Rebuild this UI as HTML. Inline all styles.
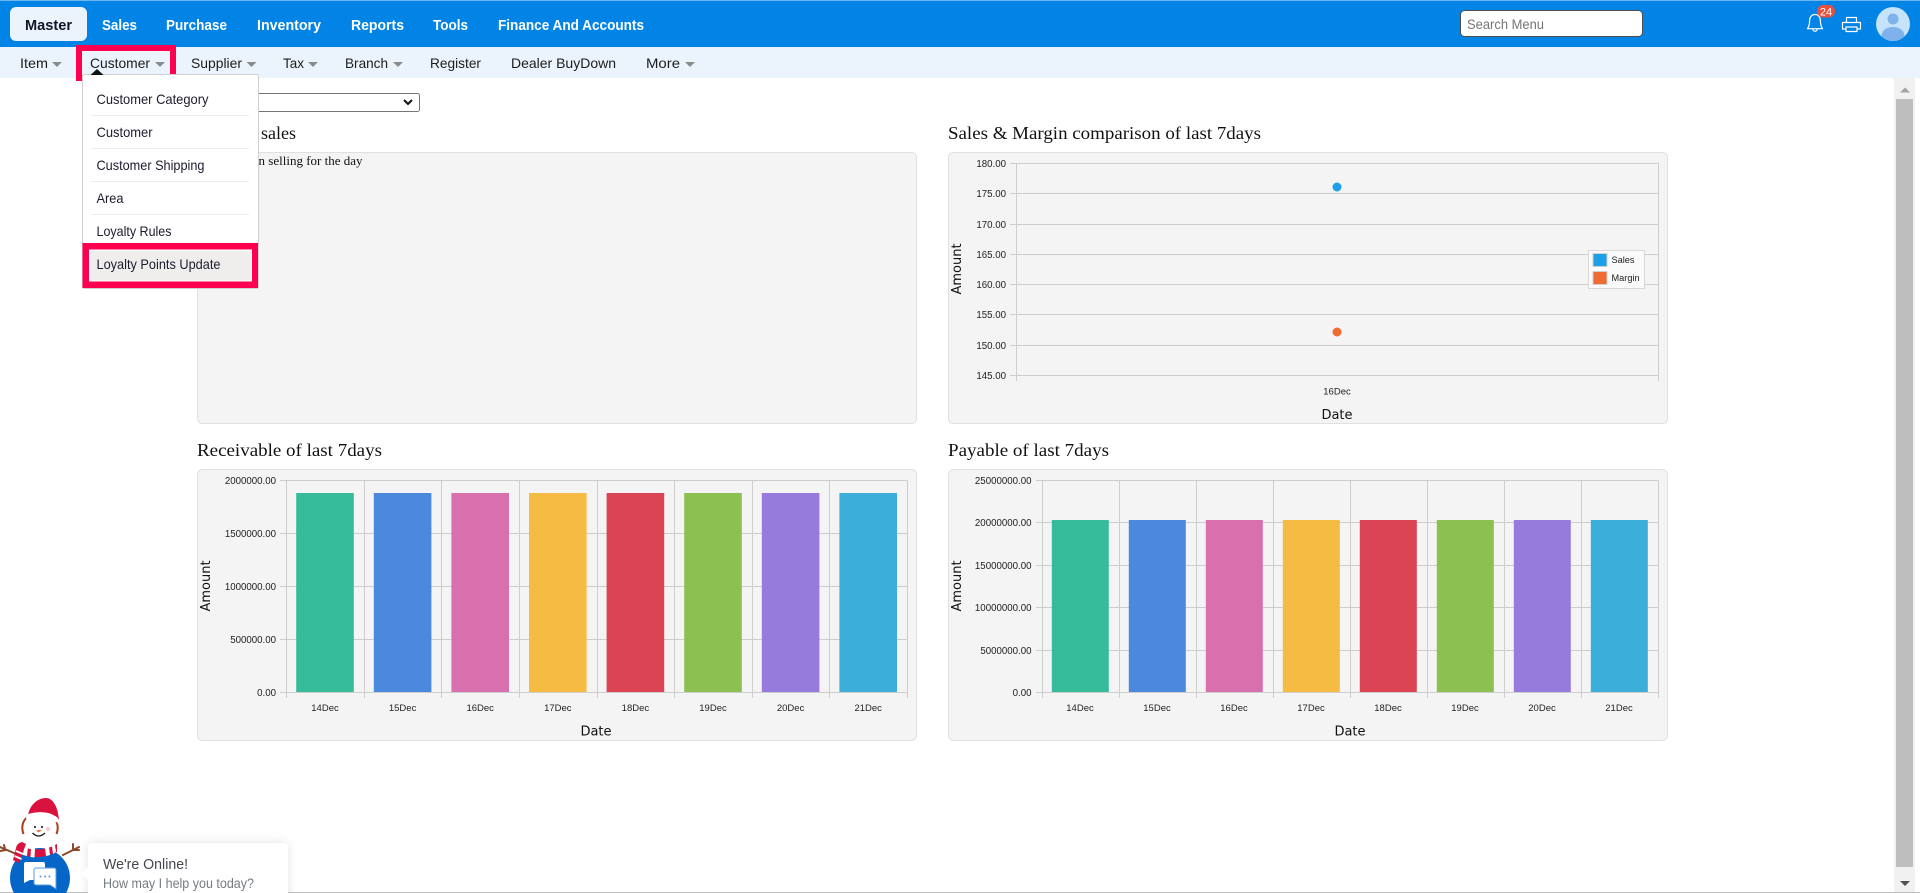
<!DOCTYPE html>
<html><head><meta charset="utf-8"><title>Dashboard</title>
<style>
html,body{margin:0;padding:0;width:1920px;height:893px;overflow:hidden;background:#fff}
body{position:relative;font-family:"Liberation Sans",sans-serif}
svg{position:absolute;left:0;top:0}
.sf{font-family:"Liberation Serif",serif;fill:#111}
.s{font-family:"Liberation Sans",sans-serif}
.top{font-size:15px;font-weight:700;fill:#fff}
.sub{font-size:14px;fill:#1c1c1c}
.dd{font-size:14px;fill:#1c1c2e}
.l{font-size:9.7px;fill:#222;text-anchor:end}
.c{font-size:9.5px;fill:#222;text-anchor:middle}
.a{font-family:"DejaVu Sans",sans-serif;font-size:13px;fill:#111;text-anchor:middle}
.g{stroke:#cdcdcd;stroke-width:1;fill:none;shape-rendering:crispEdges}
.car{fill:#8b8b8b}
</style></head>
<body>
<svg width="1920" height="893" viewBox="0 0 1920 893">
<!-- page frame -->
<rect x="0" y="892" width="1920" height="1" fill="#bdbdbd"/>
<!-- top bar -->
<rect x="0" y="1" width="1920" height="46" fill="#0283e6"/>
<rect x="0" y="0" width="1920" height="1" fill="#6eb6ee"/>
<rect x="0" y="47" width="1920" height="31" fill="#ebf4fc"/>
<rect x="10" y="7" width="77" height="34" rx="6" fill="#ebf4fc"/>
<text x="25" y="30" class="top" style="fill:#14142b" textLength="47" lengthAdjust="spacingAndGlyphs">Master</text>
<text x="102" y="30" class="top" textLength="35" lengthAdjust="spacingAndGlyphs">Sales</text>
<text x="166" y="30" class="top" textLength="61" lengthAdjust="spacingAndGlyphs">Purchase</text>
<text x="257" y="30" class="top" textLength="64" lengthAdjust="spacingAndGlyphs">Inventory</text>
<text x="351" y="30" class="top" textLength="53" lengthAdjust="spacingAndGlyphs">Reports</text>
<text x="433" y="30" class="top" textLength="35" lengthAdjust="spacingAndGlyphs">Tools</text>
<text x="498" y="30" class="top" textLength="146" lengthAdjust="spacingAndGlyphs">Finance And Accounts</text>
<!-- search -->
<rect x="1460.5" y="10.5" width="182" height="26" rx="4" fill="#fff" stroke="#4d4d4d"/>
<text x="1467" y="29" font-size="14" fill="#757575" class="s" textLength="77" lengthAdjust="spacingAndGlyphs">Search Menu</text>
<!-- bell -->
<path d="M1815 14.5c-3.6 0-5.4 2.8-5.4 6.200 0 3.600-.4 5.600-2.200 8h15.200c-1.800-2.400-2.200-4.400-2.200-8 0-3.400-1.800-6.200-5.400-6.200z" fill="none" stroke="#fff" stroke-width="1.200" stroke-linejoin="round"/>
<path d="M1812.800 29a2.200 2.200 0 0 0 4.400 0" fill="none" stroke="#fff" stroke-width="1.200"/>
<rect x="1817" y="5" width="18" height="12.500" rx="6.200" fill="#e9503e"/>
<text x="1826" y="15.300" font-size="11" fill="#fff" text-anchor="middle" class="s">24</text>
<!-- printer -->
<path d="M1846.500 22.500v-5h10v5M1845.500 29h-3v-6.500h18V29h-3M1846 27h11v4.500h-11z" fill="none" stroke="#fff" stroke-width="1.200" stroke-linejoin="round"/>
<!-- avatar -->
<circle cx="1893" cy="24" r="17" fill="#c6e3fc"/>
<circle cx="1893" cy="19" r="5.500" fill="#7fb2ea"/>
<path d="M1881.500 36.500c0-6 5-9.500 11.500-9.500s11.500 3.500 11.500 9.500a17 17 0 0 1-23 0z" fill="#7fb2ea"/>

<!-- sub nav -->
<text x="20" y="68" class="sub" textLength="28" lengthAdjust="spacingAndGlyphs">Item</text><path class="car" d="M52 62h10l-5 5z"/>
<text x="90" y="68" class="sub" textLength="60" lengthAdjust="spacingAndGlyphs">Customer</text><path class="car" d="M155 62h10l-5 5z"/>
<text x="191" y="68" class="sub" textLength="51" lengthAdjust="spacingAndGlyphs">Supplier</text><path class="car" d="M246.500 62h10l-5 5z"/>
<text x="283" y="68" class="sub" textLength="21" lengthAdjust="spacingAndGlyphs">Tax</text><path class="car" d="M308 62h10l-5 5z"/>
<text x="345" y="68" class="sub" textLength="43" lengthAdjust="spacingAndGlyphs">Branch</text><path class="car" d="M393 62h10l-5 5z"/>
<text x="430" y="68" class="sub" textLength="51" lengthAdjust="spacingAndGlyphs">Register</text>
<text x="511" y="68" class="sub" textLength="105" lengthAdjust="spacingAndGlyphs">Dealer BuyDown</text>
<text x="646" y="68" class="sub" textLength="34" lengthAdjust="spacingAndGlyphs">More</text><path class="car" d="M685 62h10l-5 5z"/>

<!-- scrollbar -->
<rect x="1894" y="78" width="21" height="814" fill="#f1f1f1"/>
<rect x="1896" y="99" width="17" height="768" fill="#bebebe"/>
<path d="M1905 87.500l5 5h-10z" fill="#a3a3a3"/>
<path d="M1900 881h10l-5 5z" fill="#505050"/>

<!-- content headings -->
<text x="296" y="139" class="sf" font-size="18" text-anchor="end">Top sales</text>
<text x="948" y="139" class="sf" font-size="18" textLength="313" lengthAdjust="spacingAndGlyphs">Sales &amp; Margin comparison of last 7days</text>
<text x="197" y="456" class="sf" font-size="18" textLength="185" lengthAdjust="spacingAndGlyphs">Receivable of last 7days</text>
<text x="948" y="456" class="sf" font-size="18" textLength="161" lengthAdjust="spacingAndGlyphs">Payable of last 7days</text>

<!-- select -->
<rect x="197.500" y="93.500" width="222" height="18" rx="2" fill="#fff" stroke="#767676"/>
<path d="M404 100l4 4 4-4" fill="none" stroke="#111" stroke-width="2"/>

<!-- panels -->
<rect x="197.500" y="152.500" width="719" height="271" rx="5" fill="#f4f4f4" stroke="#e0e0e0"/>
<rect x="948.500" y="152.500" width="719" height="271" rx="5" fill="#f4f4f4" stroke="#e0e0e0"/>
<rect x="197.500" y="469.500" width="719" height="271" rx="5" fill="#f4f4f4" stroke="#e0e0e0"/>
<rect x="948.500" y="469.500" width="719" height="271" rx="5" fill="#f4f4f4" stroke="#e0e0e0"/>
<text x="362.500" y="165" class="sf" font-size="13" text-anchor="end">No item on selling for the day</text>

<!-- chart sales & margin -->
<path class="g" d="M1016.500 163.500H1658.500V381M1016.500 163.500V381M1010 163.500h6.500M1010 193.500H1658.500M1010 224.500H1658.500M1010 254.500H1658.500M1010 284.500H1658.500M1010 314.500H1658.500M1010 345.500H1658.500M1010 375.500H1658.500"/>
<g class="s">
<text x="1006" y="167" class="l">180.00</text><text x="1006" y="197" class="l">175.00</text><text x="1006" y="228" class="l">170.00</text><text x="1006" y="258" class="l">165.00</text><text x="1006" y="288" class="l">160.00</text><text x="1006" y="318" class="l">155.00</text><text x="1006" y="349" class="l">150.00</text><text x="1006" y="379" class="l">145.00</text>
<text x="1337" y="394.500" class="c">16Dec</text>
</g>
<circle cx="1337" cy="187" r="4.500" fill="#1e9fe8"/>
<circle cx="1337" cy="332" r="4.500" fill="#f06a33"/>
<text x="1337" y="419" class="a">Date</text>
<text class="a" transform="translate(961,269) rotate(-90)">Amount</text>
<rect x="1588.500" y="250.500" width="56" height="38" fill="#fafafa" stroke="#d8d8d8"/>
<rect x="1593" y="253.500" width="14" height="13" fill="#1e9fe8" stroke="#d0d0d0"/>
<rect x="1593" y="271.500" width="14" height="13" fill="#f06a33" stroke="#d0d0d0"/>
<g class="s" font-size="9.200" fill="#222"><text x="1611.500" y="263">Sales</text><text x="1611.500" y="281">Margin</text></g>

<!-- chart receivable -->
<path class="g" d="M280 480.500H907.500M280 533.500H907.500M280 586.500H907.500M280 639.500H907.500M280 692.500H907.500M286.500 480.500V698M364.500 480.500V698M441.500 480.500V698M519.500 480.500V698M597.500 480.500V698M674.500 480.500V698M752.500 480.500V698M829.500 480.500V698M907.500 480.500V698"/>
<rect x="296.200" y="493" width="57.600" height="199" fill="#37bc9b"/>
<rect x="373.800" y="493" width="57.600" height="199" fill="#4a89dc"/>
<rect x="451.400" y="493" width="57.600" height="199" fill="#d770ad"/>
<rect x="529" y="493" width="57.600" height="199" fill="#f6bb42"/>
<rect x="606.600" y="493" width="57.600" height="199" fill="#da4453"/>
<rect x="684.200" y="493" width="57.600" height="199" fill="#8cc152"/>
<rect x="761.800" y="493" width="57.600" height="199" fill="#967adc"/>
<rect x="839.400" y="493" width="57.600" height="199" fill="#3bafda"/>
<g class="s">
<text x="276" y="484" class="l">2000000.00</text><text x="276" y="537" class="l">1500000.00</text><text x="276" y="590" class="l">1000000.00</text><text x="276" y="643" class="l">500000.00</text><text x="276" y="696" class="l">0.00</text>
<text x="325" y="711" class="c">14Dec</text><text x="402.600" y="711" class="c">15Dec</text><text x="480.200" y="711" class="c">16Dec</text><text x="557.800" y="711" class="c">17Dec</text><text x="635.400" y="711" class="c">18Dec</text><text x="713" y="711" class="c">19Dec</text><text x="790.600" y="711" class="c">20Dec</text><text x="868.200" y="711" class="c">21Dec</text>
</g>
<text x="596" y="735.500" class="a">Date</text>
<text class="a" transform="translate(210,586) rotate(-90)">Amount</text>

<!-- chart payable -->
<path class="g" d="M1036 480.500H1658.500M1036 522.500H1658.500M1036 565.500H1658.500M1036 607.500H1658.500M1036 650.500H1658.500M1036 692.500H1658.500M1042.500 480.500V698M1119.500 480.500V698M1196.500 480.500V698M1273.500 480.500V698M1350.500 480.500V698M1427.500 480.500V698M1504.500 480.500V698M1581.500 480.500V698M1658.500 480.500V698"/>
<rect x="1051.800" y="520" width="57" height="172" fill="#37bc9b"/>
<rect x="1128.800" y="520" width="57" height="172" fill="#4a89dc"/>
<rect x="1205.800" y="520" width="57" height="172" fill="#d770ad"/>
<rect x="1282.800" y="520" width="57" height="172" fill="#f6bb42"/>
<rect x="1359.800" y="520" width="57" height="172" fill="#da4453"/>
<rect x="1436.800" y="520" width="57" height="172" fill="#8cc152"/>
<rect x="1513.800" y="520" width="57" height="172" fill="#967adc"/>
<rect x="1590.800" y="520" width="57" height="172" fill="#3bafda"/>
<g class="s">
<text x="1031.500" y="484" class="l">25000000.00</text><text x="1031.500" y="526" class="l">20000000.00</text><text x="1031.500" y="569" class="l">15000000.00</text><text x="1031.500" y="611" class="l">10000000.00</text><text x="1031.500" y="654" class="l">5000000.00</text><text x="1031.500" y="696" class="l">0.00</text>
<text x="1080" y="711" class="c">14Dec</text><text x="1157" y="711" class="c">15Dec</text><text x="1234" y="711" class="c">16Dec</text><text x="1311" y="711" class="c">17Dec</text><text x="1388" y="711" class="c">18Dec</text><text x="1465" y="711" class="c">19Dec</text><text x="1542" y="711" class="c">20Dec</text><text x="1619" y="711" class="c">21Dec</text>
</g>
<text x="1350" y="735.500" class="a">Date</text>
<text class="a" transform="translate(961,586) rotate(-90)">Amount</text>

<!-- customer highlight -->
<rect x="79" y="48" width="94" height="30" fill="none" stroke="#ff0050" stroke-width="6"/>
<rect x="82.500" y="51.500" width="87" height="23" fill="none" stroke="#f4f4f4"/>

<!-- dropdown -->
<rect x="82.500" y="74.500" width="176" height="214" rx="2" fill="#fff" stroke="#cfcfcf"/>
<path d="M97 69l6.500 6h-13z" fill="#111"/>
<g stroke="#ececec"><path d="M91 115.500H249M91 148.500H249M91 181.500H249M91 214.500H249"/></g>
<text x="96.500" y="104" class="dd" textLength="112" lengthAdjust="spacingAndGlyphs">Customer Category</text>
<text x="96.500" y="137" class="dd" textLength="56" lengthAdjust="spacingAndGlyphs">Customer</text>
<text x="96.500" y="170" class="dd" textLength="108" lengthAdjust="spacingAndGlyphs">Customer Shipping</text>
<text x="96.500" y="203" class="dd" textLength="27" lengthAdjust="spacingAndGlyphs">Area</text>
<text x="96.500" y="236" class="dd" textLength="75" lengthAdjust="spacingAndGlyphs">Loyalty Rules</text>
<path fill-rule="evenodd" fill="#ff0050" d="M82.500 243H258V288H82.500zM89 249.500V281.500H252V249.500z"/>
<rect x="89" y="249.500" width="163" height="32" fill="#fff"/>
<rect x="90.500" y="251" width="160.500" height="29.500" fill="#efeeed"/>
<text x="96.500" y="269" class="dd" textLength="124" lengthAdjust="spacingAndGlyphs">Loyalty Points Update</text>

<!-- chat widget -->
<g stroke="#8a4a2a" stroke-width="2" fill="none" stroke-linecap="round">
<path d="M0 847l21 9M5 849l-1-4M6 850l-6 1M79 847l-16 8M73 850l0-6M73 850l6 0"/>
</g>
<circle cx="40" cy="878" r="30" fill="#0566c8"/>
<!-- scarf -->
<path d="M20 846q20 8 37-2l0 8q-18 9-37 2z" fill="#d9123f"/>
<path d="M24 845l4 1-1 10-4-1zM31 848l4 .5-.5 9-4-.5zM45 848l4-1 1 8-4 1zM52 846l3-1 1 7-3 2z" fill="#fff"/>
<path d="M22 842q-5 1-6 6l-3 12 6 3 7-19z" fill="#d9123f"/>
<path d="M16 851l7 3M14.500 856l7 3" stroke="#fff" stroke-width="1.800"/>
<!-- head -->
<circle cx="40" cy="829" r="18" fill="#fff"/>
<path d="M23.500 834c-3-8 0-14 4-17M56.500 834c3-8 0-14-4-17" fill="none" stroke="#a83c1a" stroke-width="2"/>
<!-- hat -->
<path d="M28 816c1-10 9-18 18-18 7 0 12 9 13 22l-7-3c-8-3-17-3-24-1z" fill="#d9123f"/>
<path d="M27 820c-1-3 0-5 3-6 8-2 18-2 24 2 2 1 4 2 4 4 0 2-2 2-4 1-7-3-17-4-23-1-2 1-3 1-4 0z" fill="#fff" stroke="#fff"/>
<circle cx="60.500" cy="822" r="3.200" fill="#fff"/>
<!-- face -->
<circle cx="35" cy="827" r="1.100" fill="#333"/><circle cx="42" cy="827" r="1.100" fill="#333"/>
<path d="M36 830.500l6-.8-3.500 2.800z" fill="#f0642a"/>
<path d="M32.500 833q6 6 12.500 0" fill="none" stroke="#222" stroke-width="1.300"/>
<circle cx="48" cy="829" r="2" fill="#f8c8d0"/>
<!-- chat bubbles -->
<path d="M24 864a2 2 0 0 1 2-2h17a2 2 0 0 1 2 2v14a2 2 0 0 1-2 2H30l-6 3z" fill="#fff"/>
<path d="M34 870a2 2 0 0 1 2-2h18a2 2 0 0 1 2 2v19l-6-4H36a2 2 0 0 1-2-2z" fill="#fff" stroke="#5a9be0" stroke-width="1"/>
<g fill="#5a9be0"><circle cx="40.500" cy="876.500" r="1"/><circle cx="45" cy="876.500" r="1"/><circle cx="49.500" cy="876.500" r="1"/></g>
<defs><filter id="sh" x="-20%" y="-30%" width="140%" height="170%"><feGaussianBlur stdDeviation="5"/></filter></defs>
<rect x="88" y="843" width="200" height="70" rx="5" fill="#b8bcc4" opacity=".45" filter="url(#sh)"/>
<rect x="88" y="843" width="200" height="60" rx="4" fill="#fff"/>
<path d="M88.500 866.500l7 7-7 7-7-7z" fill="#fff"/>
<text x="103" y="869" font-size="15" fill="#43474e" class="s" textLength="85" lengthAdjust="spacingAndGlyphs">We're Online!</text>
<text x="103" y="888" font-size="13.500" fill="#777b82" class="s" textLength="151" lengthAdjust="spacingAndGlyphs">How may I help you today?</text>
</svg>
</body></html>
